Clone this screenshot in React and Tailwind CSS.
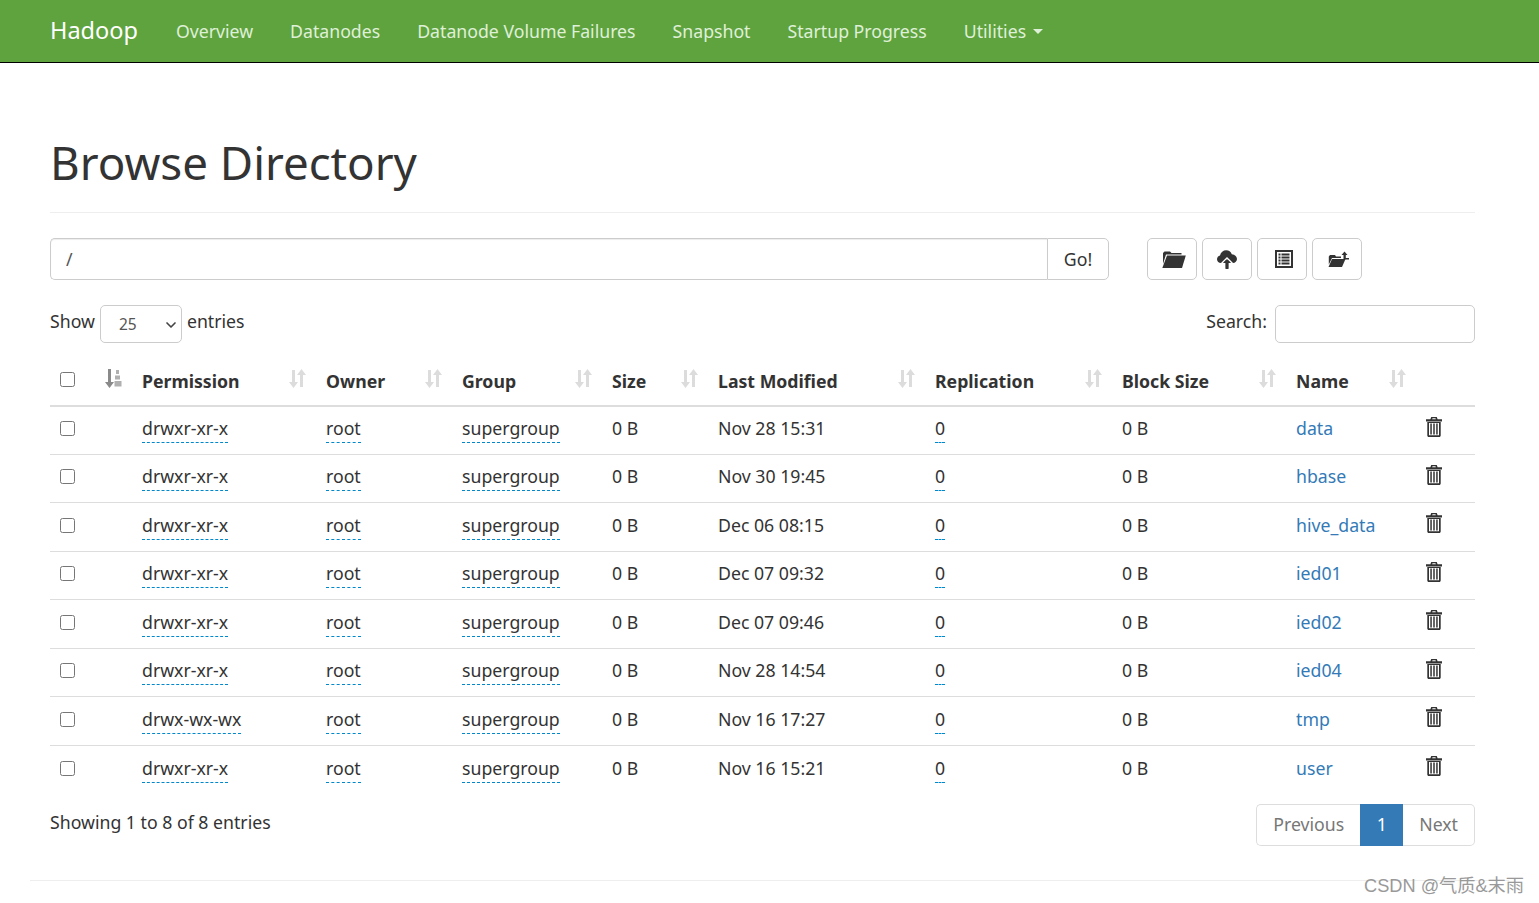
import { ChevronDown } from "lucide-react";

const navItems = ["Overview", "Datanodes", "Datanode Volume Failures", "Snapshot", "Startup Progress"];

const rows = [
  ["drwxr-xr-x", "Nov 28 15:31", "data"],
  ["drwxr-xr-x", "Nov 30 19:45", "hbase"],
  ["drwxr-xr-x", "Dec 06 08:15", "hive_data"],
  ["drwxr-xr-x", "Dec 07 09:32", "ied01"],
  ["drwxr-xr-x", "Dec 07 09:46", "ied02"],
  ["drwxr-xr-x", "Nov 28 14:54", "ied04"],
  ["drwx-wx-wx", "Nov 16 17:27", "tmp"],
  ["drwxr-xr-x", "Nov 16 15:21", "user"],
];

const columns = ["Permission", "Owner", "Group", "Size", "Last Modified", "Replication", "Block Size", "Name"];

function SortIcon({ active }) {
  return (
    <svg width="17" height="19" viewBox="0 0 17 19" className="shrink-0 fill-[#dcdcdc]">
      {active ? (
        <>
          <path className="fill-[#8a8a8a]" d="M3 0h3v13h3l-4.500 6L0 13h3z" />
          <path className="fill-[#b0b0b0]" d="M11 1h3v4h-3zM10 6.500h5v4h-5zM9.500 12h7v5.500h-7z" />
        </>
      ) : (
        <>
          <path d="M3 1h3v12h3l-4.500 6L0 13h3z" />
          <path d="M11 18h3V6h3L12.500 0 8 6h3z" />
        </>
      )}
    </svg>
  );
}

function FolderOpen() {
  return (
    <svg width="24" height="17" viewBox="0 0 24 17" className="ml-1 fill-[#333]">
      <path d="M1 2 2.500 0.500H8L9.500 2H19.500V3.500H4L1 13z" />
      <path d="M5 4.500H23.800L20 17H0.300z" />
    </svg>
  );
}

function CloudUpload() {
  return (
    <svg width="20" height="19" viewBox="0 0 20 19" className="fill-[#333]">
      <path d="M4 13C1.800 13 0 11.300 0 9.200 0 7.400 1.300 5.900 3 5.500 3.700 2.300 6.200 0.300 9.200 0.300c2.600 0 4.800 1.600 5.600 3.900 2.800 0.100 5.200 2.300 5.200 4.800 0 2.200-1.800 4-4 4z" />
      <path d="M10 8 15.500 13.500H12V19H8V13.500H4.500z" className="stroke-white" strokeWidth="1.500" />
      <path d="M10 9 14 13H11.500V19H8.500V13H6z" />
    </svg>
  );
}

function ListAlt() {
  return (
    <svg width="18" height="18" viewBox="0 0 18 18" className="ml-1 fill-[#333]">
      <path fillRule="evenodd" d="M0 0h18v18H0zM2 2v14h14V2z" />
      <path d="M3.500 3.500h2v2h-2zM6.500 3.500h8v2h-8zM3.500 6.500h2v2h-2zM6.500 6.500h8v2h-8zM3.500 9.500h2v2h-2zM6.500 9.500h8v2h-8zM3.500 12.500h2v2h-2zM6.500 12.500h8v2h-8z" />
    </svg>
  );
}

function FolderUp() {
  return (
    <svg width="21" height="16" viewBox="0 0 21 16" className="ml-0.5 fill-[#333]">
      <path d="M0.800 5.500 2 4H7L8 5.500H13V7H4L0.800 13.500z" />
      <path d="M4 8H17.500L14 16H0.500z" />
      <path d="M13.500 4 16.500 0.500 19.500 4H17.800V7H21V8.500H15.500V4z" />
    </svg>
  );
}

function Trash() {
  return (
    <svg width="16" height="20" viewBox="0 0 16 20" className="-mt-[4px] fill-[#333]">
      <path d="M5.200 0h5.600l.8 2.200H16V4.400H0V2.200h4.400zM6.500 1.200l-.3 1h3.600l-.3-1z" />
      <path fillRule="evenodd" d="M1.300 5h13.400v13.500c0 .9-.6 1.500-1.500 1.500H2.800c-.9 0-1.500-.6-1.500-1.500zM3 6v12.300h10V6z" />
      <path d="M4.300 6.500h1.500v11H4.300zM7.250 6.500h1.500v11h-1.500zM10.200 6.500h1.500v11h-1.500z" />
    </svg>
  );
}

function Dashed({ children }) {
  return <span className="border-b border-dashed border-[#0088cc] pb-[2px]">{children}</span>;
}

export default function App() {
  return (
    <div className="relative min-h-[903px] overflow-hidden bg-white font-['Noto_Sans',sans-serif] text-[17.7px] text-[#333]">
      {/* navbar */}
      <nav className="flex h-[63px] items-center border-b border-black bg-[#5fa33e] pl-[50px] text-[#dff0d8]">
        <a className="mr-[38px] text-[23.5px] text-white">Hadoop</a>
        <div className="flex items-center gap-[37px]">
          {navItems.map((item) => (
            <a key={item}>{item}</a>
          ))}
          <a className="flex items-center gap-[7px]">
            Utilities
            <span className="mt-0.5 h-0 w-0 border-x-[5px] border-t-[5px] border-x-transparent border-t-[#dff0d8]"></span>
          </a>
        </div>
      </nav>

      <main className="w-[1525px] px-[50px]">
        <div className="mt-[50px] flex h-[100px] items-center border-b border-[#eee]">
          <h1 className="text-[45.7px] leading-none">Browse Directory</h1>
        </div>

        {/* path bar */}
        <div className="mt-[25px] flex h-[42px] w-[1312px] items-stretch">
          <div className="flex w-[1059px] items-stretch">
            <input
              defaultValue="/"
              className="min-w-0 flex-1 rounded-l-[5px] border border-r-0 border-[#ccc] px-[15px] text-[#555] shadow-[inset_0_1px_1px_rgba(0,0,0,0.075)] outline-none"
            />
            <button className="w-[62px] rounded-r-[5px] border border-[#ccc] bg-white">Go!</button>
          </div>
          <div className="ml-[38px] flex gap-[5px]">
            <button className="flex w-[50px] items-center justify-center rounded-[5px] border border-[#ccc] bg-white"><FolderOpen /></button>
            <button className="flex w-[50px] items-center justify-center rounded-[5px] border border-[#ccc] bg-white"><CloudUpload /></button>
            <button className="flex w-[50px] items-center justify-center rounded-[5px] border border-[#ccc] bg-white"><ListAlt /></button>
            <button className="flex w-[50px] items-center justify-center rounded-[5px] border border-[#ccc] bg-white"><FolderUp /></button>
          </div>
        </div>

        {/* table controls */}
        <div className="mt-[25px] flex h-[38px] items-start justify-between">
          <div className="flex items-start">
            <span className="mt-[3px]">Show</span>
            <div className="relative mx-[5px]">
              <select className="block h-[38px] w-[82px] appearance-none rounded-[5px] border border-[#ccc] bg-white pl-[18px] pt-[2px] text-[15.5px] text-[#555]">
                <option>25</option>
              </select>
              <ChevronDown size={16} strokeWidth={2.5} className="pointer-events-none absolute right-[3px] top-[12px] text-[#444]" />
            </div>
            <span className="mt-[3px]">entries</span>
          </div>
          <div className="flex items-start">
            <span className="mt-[3px]">Search:</span>
            <input className="ml-2 h-[38px] w-[200px] rounded-[5px] border border-[#ccc]" />
          </div>
        </div>

        {/* listing */}
        <table className="mt-[5px] w-[1425px] table-fixed border-collapse">
          <colgroup>
            <col className="w-[82px]" />
            <col className="w-[184px]" />
            <col className="w-[136px]" />
            <col className="w-[150px]" />
            <col className="w-[106px]" />
            <col className="w-[217px]" />
            <col className="w-[187px]" />
            <col className="w-[174px]" />
            <col className="w-[130px]" />
            <col className="w-[59px]" />
          </colgroup>
          <thead>
            <tr className="h-[57.5px] border-b-2 border-[#ddd]">
              <th className="px-[10px] pt-[4px]">
                <div className="flex items-center justify-between">
                  <input type="checkbox" className="mt-[2px] h-[15px] w-[15px]" />
                  <SortIcon active />
                </div>
              </th>
              {columns.map((col) => (
                <th key={col} className="px-[10px] pt-[4px] text-left font-bold">
                  <div className="flex items-center justify-between">
                    <span className="mt-[6px]">{col}</span>
                    <SortIcon />
                  </div>
                </th>
              ))}
              <th></th>
            </tr>
          </thead>
          <tbody>
            {rows.map(([perm, modified, name]) => (
              <tr key={name} className="h-[48.5px] border-b border-[#ddd] last:border-b-0">
                <td className="px-[10px] pb-[3px]">
                  <input type="checkbox" className="block h-[15px] w-[15px]" />
                </td>
                <td className="px-[10px] pb-[3px]"><Dashed>{perm}</Dashed></td>
                <td className="px-[10px] pb-[3px]"><Dashed>root</Dashed></td>
                <td className="px-[10px] pb-[3px]"><Dashed>supergroup</Dashed></td>
                <td className="px-[10px] pb-[3px]">0 B</td>
                <td className="px-[10px] pb-[3px]">{modified}</td>
                <td className="px-[10px] pb-[3px]"><Dashed>0</Dashed></td>
                <td className="px-[10px] pb-[3px]">0 B</td>
                <td className="px-[10px] pb-[3px]"><a className="text-[#337ab7]">{name}</a></td>
                <td className="px-[10px] pb-[3px]"><Trash /></td>
              </tr>
            ))}
          </tbody>
        </table>

        {/* footer of table */}
        <div className="mt-[10px] flex items-start justify-between">
          <span className="mt-[5px]">Showing 1 to 8 of 8 entries</span>
          <div className="flex h-[42px] items-stretch">
            <a className="flex items-center rounded-l-[5px] border border-r-0 border-[#ddd] px-4 text-[#777]">Previous</a>
            <a className="flex w-[43px] items-center justify-center bg-[#337ab7] text-white">1</a>
            <a className="flex items-center rounded-r-[5px] border border-l-0 border-[#ddd] px-4 text-[#777]">Next</a>
          </div>
        </div>
      </main>

      <hr className="mx-[30px] mt-[34px] border-[#eee]" />

      {/* watermark */}
      <span className="absolute right-[15px] top-[873px] font-['Liberation_Sans','Noto_Sans_CJK_SC',sans-serif] text-[18.2px] text-[#999]">
        CSDN @气质&amp;末雨
      </span>
    </div>
  );
}
